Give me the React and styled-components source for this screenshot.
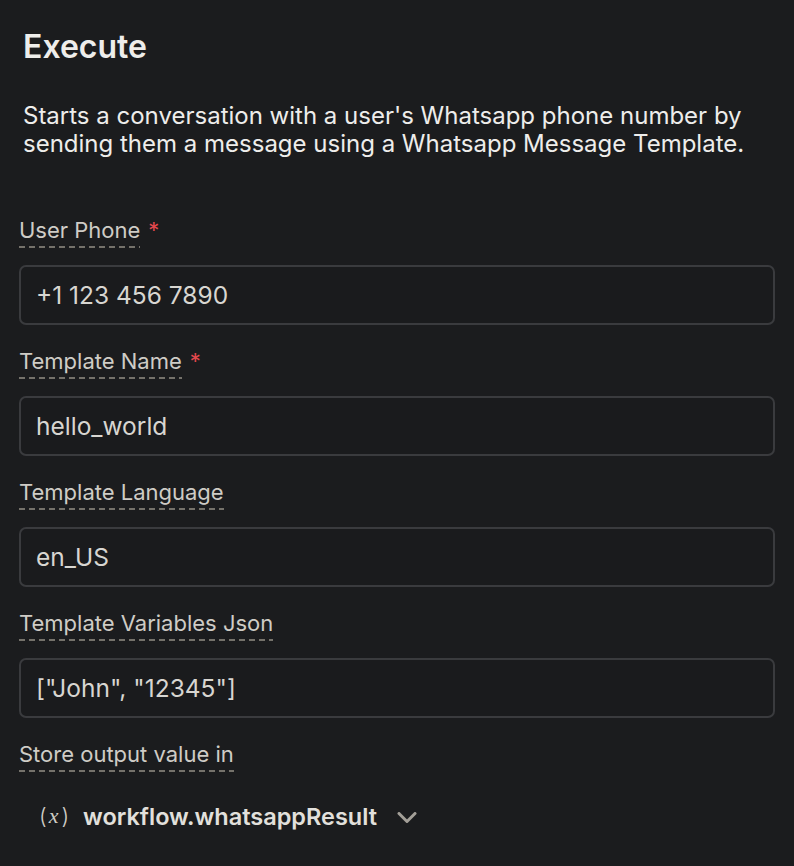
import React from 'react';
import styled, { createGlobalStyle } from 'styled-components';

const GlobalStyle = createGlobalStyle`
  html, body {
    margin: 0;
    padding: 0;
    background: #1b1c1e;
  }
  body {
    font-family: Inter, "Noto Sans", sans-serif;
    -webkit-font-smoothing: antialiased;
  }
`;

const fields = [
  { label: 'User Phone', value: '+1 123 456 7890', required: true },
  { label: 'Template Name', value: 'hello_world', required: true },
  { label: 'Template Language', value: 'en_US' },
  { label: 'Template Variables Json', value: '["John", "12345"]' },
];

const App = () => {
  return (
    <>
      <GlobalStyle />
      <Panel>
        <Title>Execute</Title>
        <Description>
          Starts a conversation with a user's Whatsapp phone number by sending them a message using a
          Whatsapp Message Template.
        </Description>

        <Fields>
          {fields.map((field) => (
            <Field key={field.label}>
              <LabelRow>
                <Label>{field.label}</Label>
                {field.required && <Required>*</Required>}
              </LabelRow>
              <Input defaultValue={field.value} />
            </Field>
          ))}

          <Field>
            <LabelRow>
              <Label>Store output value in</Label>
            </LabelRow>
            <OutputRow>
              <VarIcon>
                (<i>x</i>)
              </VarIcon>
              <OutputName>workflow.whatsappResult</OutputName>
              <Chevron viewBox="0 0 20 11">
                <path d="M2 1.5l8 8 8-8" />
              </Chevron>
            </OutputRow>
          </Field>
        </Fields>
      </Panel>
    </>
  );
};

// Styles
const Panel = styled.div`
  width: 794px;
  height: 866px;
  box-sizing: border-box;
  padding: 27px 19px 0 19px;
  background: #1b1c1e;
  overflow: hidden;
`;

const Title = styled.h1`
  margin: 0 0 0 4px;
  font-size: 32px;
  line-height: 40px;
  font-weight: 600;
  color: #eeedeb;
`;

const Description = styled.p`
  margin: 35px 0 0 4px;
  font-size: 24px;
  line-height: 28px;
  color: #eeedeb;
  max-width: 740px;
`;

const Fields = styled.div`
  display: flex;
  flex-direction: column;
  gap: 22px;
  margin-top: 58px;
`;

const Field = styled.div`
  display: flex;
  flex-direction: column;
  gap: 17px;
`;

const LabelRow = styled.div`
  display: flex;
  align-items: flex-start;
  gap: 8px;
`;

const Label = styled.span`
  font-size: 22px;
  line-height: 28px;
  color: #cfccc6;
  padding-bottom: 4px;
  background-image: repeating-linear-gradient(
    to right,
    #75726b 0,
    #75726b 6px,
    transparent 6px,
    transparent 10px
  );
  background-size: 100% 2px;
  background-position: left bottom;
  background-repeat: no-repeat;
`;

const Required = styled.span`
  color: #e5484d;
  font-size: 22px;
  line-height: 28px;
`;

const Input = styled.input`
  box-sizing: border-box;
  width: 100%;
  height: 60px;
  padding: 0 15px;
  background: #1a1b1d;
  border: 2px solid #3a3b3e;
  border-radius: 7px;
  font-family: Inter, "Noto Sans", sans-serif;
  font-size: 24.5px;
  color: #d8d6d1;
  outline: none;
`;

const OutputRow = styled.div`
  display: flex;
  align-items: center;
  height: 40px;
  padding-left: 20px;
  margin-top: 7px;
`;

const VarIcon = styled.span`
  display: flex;
  align-items: center;
  font-size: 22px;
  color: #cfccc6;
  margin-right: 14px;
  font-family: Inter, sans-serif;
  font-weight: 300;

  i {
    font-family: "Liberation Serif", serif;
    font-style: italic;
    font-size: 22px;
    padding: 0 3px 0 2px;
  }
`;

const OutputName = styled.span`
  font-size: 23.5px;
  font-weight: 600;
  color: #e2e0dc;
`;

const Chevron = styled.svg`
  width: 20px;
  height: 11px;
  margin-left: 20px;
  margin-top: 2px;
  fill: none;
  stroke: #a39f98;
  stroke-width: 3;
  stroke-linecap: round;
  stroke-linejoin: round;
`;

export default App;
